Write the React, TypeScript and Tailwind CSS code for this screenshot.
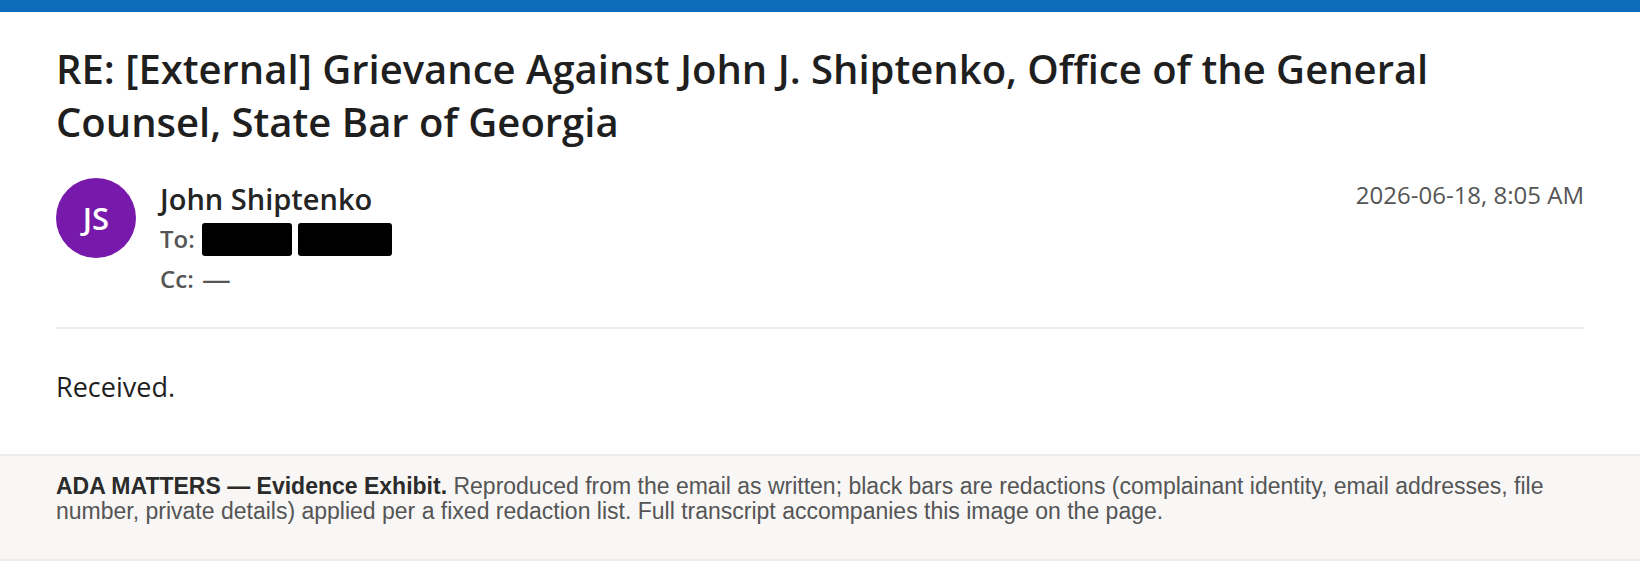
import React from "react";

const SANS = "font-['Open_Sans','Noto_Sans',sans-serif]";

function Redacted({ w }: { w: string }) {
  return <span className={`inline-block h-[33px] rounded-[3px] bg-black align-[-4px] ${w}`} />;
}

export default function App() {
  return (
    <div className={`min-h-[562px] w-full bg-white ${SANS}`}>
      {/* brand bar */}
      <div className="h-3 w-full bg-[#0f6cbd]" />

      <div className="px-14">
        <h1 className="max-w-[1400px] pt-[30px] text-[40px] font-semibold leading-[53px] text-[#1f1f1f]">
          RE: [External] Grievance Against John J. Shiptenko, Office of the General Counsel, State Bar of Georgia
        </h1>

        {/* sender block */}
        <div className="mt-[30px] flex items-start">
          <div className="flex h-20 w-20 shrink-0 items-center justify-center rounded-full bg-[#7719aa] text-[31px] font-semibold text-white">
            JS
          </div>
          <div className="ml-6 flex-1 pt-[4px]">
            <div className="text-[29px] font-semibold leading-[34px] text-[#242424]">John Shiptenko</div>
            <div className="mt-[4px] flex items-center gap-[6px] text-[24px] font-semibold leading-[38px] text-[#555]">
              <span className="mr-[1px]">To:</span>
              <Redacted w="w-[90px]" />
              <Redacted w="w-[94px]" />
            </div>
            <div className="mt-[3px] text-[24px] font-semibold leading-[36px] text-[#555]">
              Cc: <span className="ml-[2px] inline-block origin-left scale-x-[1.2]">—</span>
            </div>
          </div>
          <div className="text-[24px] leading-[34px] text-[#555]">2026-06-18, 8:05 AM</div>
        </div>

        <div className="mt-[30px] h-[2px] bg-[#ebebeb]" />

        <p className="mt-[38px] text-[27px] leading-[40px] text-[#1f1f1f]">Received.</p>
      </div>

      {/* exhibit caption */}
      <div className="mt-[47px] border-y-2 border-[#ececec] bg-[#f8f7f5] px-14 pb-[34px] pt-[18px] font-['Liberation_Sans',Arial,sans-serif] text-[23px] leading-[1.1] text-[#555]">
        <span className="font-bold text-[#2b2b2b]">ADA MATTERS — Evidence Exhibit.</span> Reproduced from the email as
        written; black bars are redactions (complainant identity, email addresses, file number, private details) applied
        per a fixed redaction list. Full transcript accompanies this image on the page.
      </div>
    </div>
  );
}
